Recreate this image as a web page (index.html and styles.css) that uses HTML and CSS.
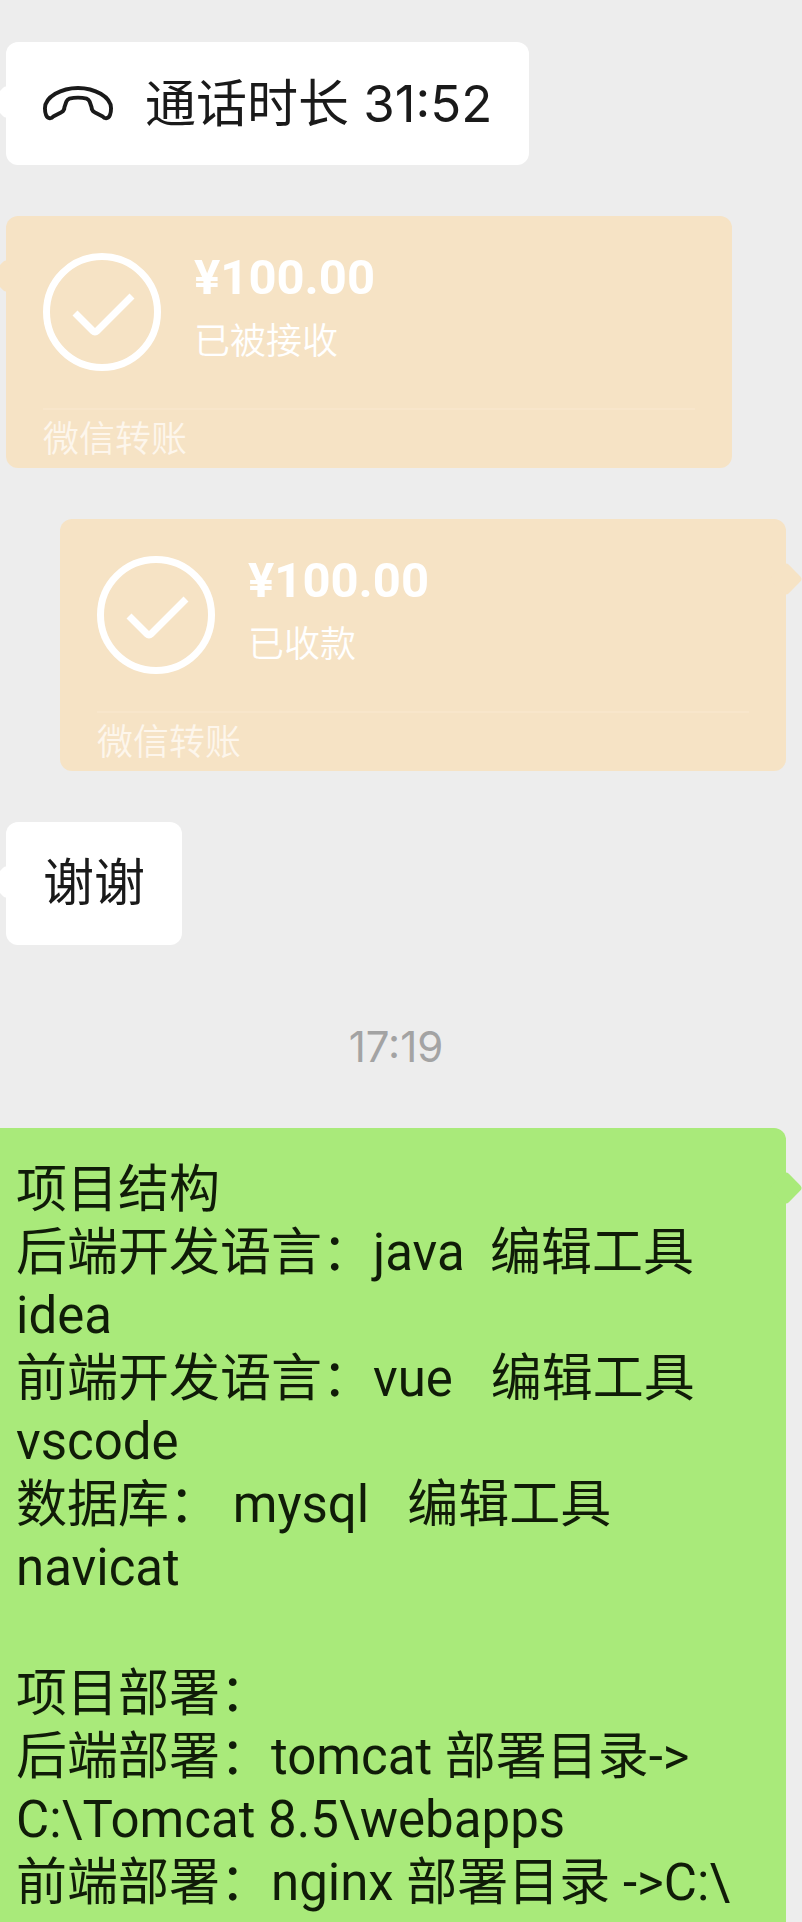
FILE: index.html
```
<!DOCTYPE html>
<html lang="zh-CN">
<head>
  <meta charset="UTF-8" />
  <meta name="viewport" content="width=device-width, initial-scale=1.0"/>
  <title>聊天记录</title>
  <link rel="stylesheet" href="styles.css">
</head>
<body>
  <main class="chat">
    <div class="bubble left call">
      <svg class="call-icon" viewBox="0 0 72 36" aria-hidden="true">
        <path d="M8 33C3 34 2 27 2 23C2 11 19 2 36 2S70 11 70 23C70 27 69 34 64 33Q63 33 61 31L53 27Q50 25 50 22L48 16Q47 14 45 13Q36 11 27 13Q25 14 24 16L22 22Q22 25 19 27L11 31Q9 33 8 33Z"/>
      </svg>
      <span>通话时长 31:52</span>
    </div>

    <section class="transfer left">
      <div class="transfer-main">
        <svg class="check-icon" viewBox="0 0 118 118" aria-hidden="true">
          <circle cx="59" cy="59" r="55.5"/>
          <path d="M32 60L50 78Q52 80 54 78L89 43"/>
        </svg>
        <div class="transfer-info">
          <div class="amount">¥100.00</div>
          <div class="status">已被接收</div>
        </div>
      </div>
      <div class="transfer-foot">微信转账</div>
    </section>

    <section class="transfer right">
      <div class="transfer-main">
        <svg class="check-icon" viewBox="0 0 118 118" aria-hidden="true">
          <circle cx="59" cy="59" r="55.5"/>
          <path d="M32 60L50 78Q52 80 54 78L89 43"/>
        </svg>
        <div class="transfer-info">
          <div class="amount">¥100.00</div>
          <div class="status">已收款</div>
        </div>
      </div>
      <div class="transfer-foot">微信转账</div>
    </section>

    <div class="bubble left">谢谢</div>

    <time class="time">17:19</time>

    <div class="bubble right note">项目结构
后端开发语言：java  编辑工具
idea
前端开发语言：vue   编辑工具
vscode
数据库： mysql   编辑工具
navicat

项目部署：
后端部署：tomcat 部署目录-&gt;
C:\Tomcat 8.5\webapps
前端部署：nginx 部署目录 -&gt;C:\</div>
  </main>
</body>
</html>
```
FILE: styles.css
```
body {
  margin: 0;
  background-color: #ededed;
  color: #1a1a1a;
  font-family: Roboto, "Noto Sans CJK SC", sans-serif;
  overflow-x: hidden;
}
.chat {
  display: flex;
  flex-direction: column;
  align-items: flex-start;
  box-sizing: border-box;
  min-height: 100vh;
  padding: 42px 16px 0 6px;
}
.bubble,
.transfer {
  position: relative;
  border-radius: 12px;
  margin-bottom: 51px;
}
.bubble {
  padding: 30px 37px;
  background-color: #ffffff;
  font-size: 51px;
  line-height: 63px;
}
.right {
  align-self: flex-end;
}
/* flecha lateral */
.left::before,
.right::before {
  content: "";
  position: absolute;
  top: 48px;
  width: 24px;
  height: 24px;
  border-radius: 4px;
  background-color: inherit;
  transform: rotate(45deg);
}
.left::before {
  left: -12px;
}
.right::before {
  right: -12px;
}
.call {
  display: flex;
  align-items: center;
  gap: 32px;
  font-family: Inter, "Noto Sans CJK SC", sans-serif;
}
.call-icon {
  width: 70px;
  height: 35px;
  fill: none;
  stroke: #1a1a1a;
  stroke-width: 4;
  stroke-linejoin: round;
}
.transfer {
  box-sizing: border-box;
  width: 726px;
  max-width: 100%;
  padding: 37px 37px 8px;
  background-color: #f6e3c5;
  color: #ffffff;
  font-family: "Noto Sans CJK SC", sans-serif;
}
.transfer-main {
  display: flex;
  gap: 33px;
  padding-bottom: 37px;
  border-bottom: 2px solid #f8e6cb;
}
.check-icon {
  width: 118px;
  height: 118px;
  fill: none;
  stroke: #ffffff;
  stroke-width: 7;
}
.amount {
  font-family: Roboto, "Noto Sans CJK SC", sans-serif;
  font-size: 49px;
  font-weight: 700;
  line-height: 50px;
}
.status {
  margin-top: 11px;
  font-size: 36px;
  font-weight: 350;
  line-height: 48px;
}
.transfer-foot {
  padding-top: 2px;
  color: #fdf6ec;
  font-size: 36px;
  font-weight: 350;
  line-height: 48px;
}
.time {
  align-self: center;
  margin: 27px 0 57px;
  color: #a3a3a3;
  font-family: Inter, sans-serif;
  font-size: 42px;
  line-height: 48px;
}
.note {
  flex: 1;
  align-self: stretch;
  margin: 0 0 0 -6px;
  padding: 30px 16px 6px;
  border-radius: 0 12px 0 0;
  background-color: #a9ea7a;
  color: #101c08;
  white-space: pre-wrap;
}
```
